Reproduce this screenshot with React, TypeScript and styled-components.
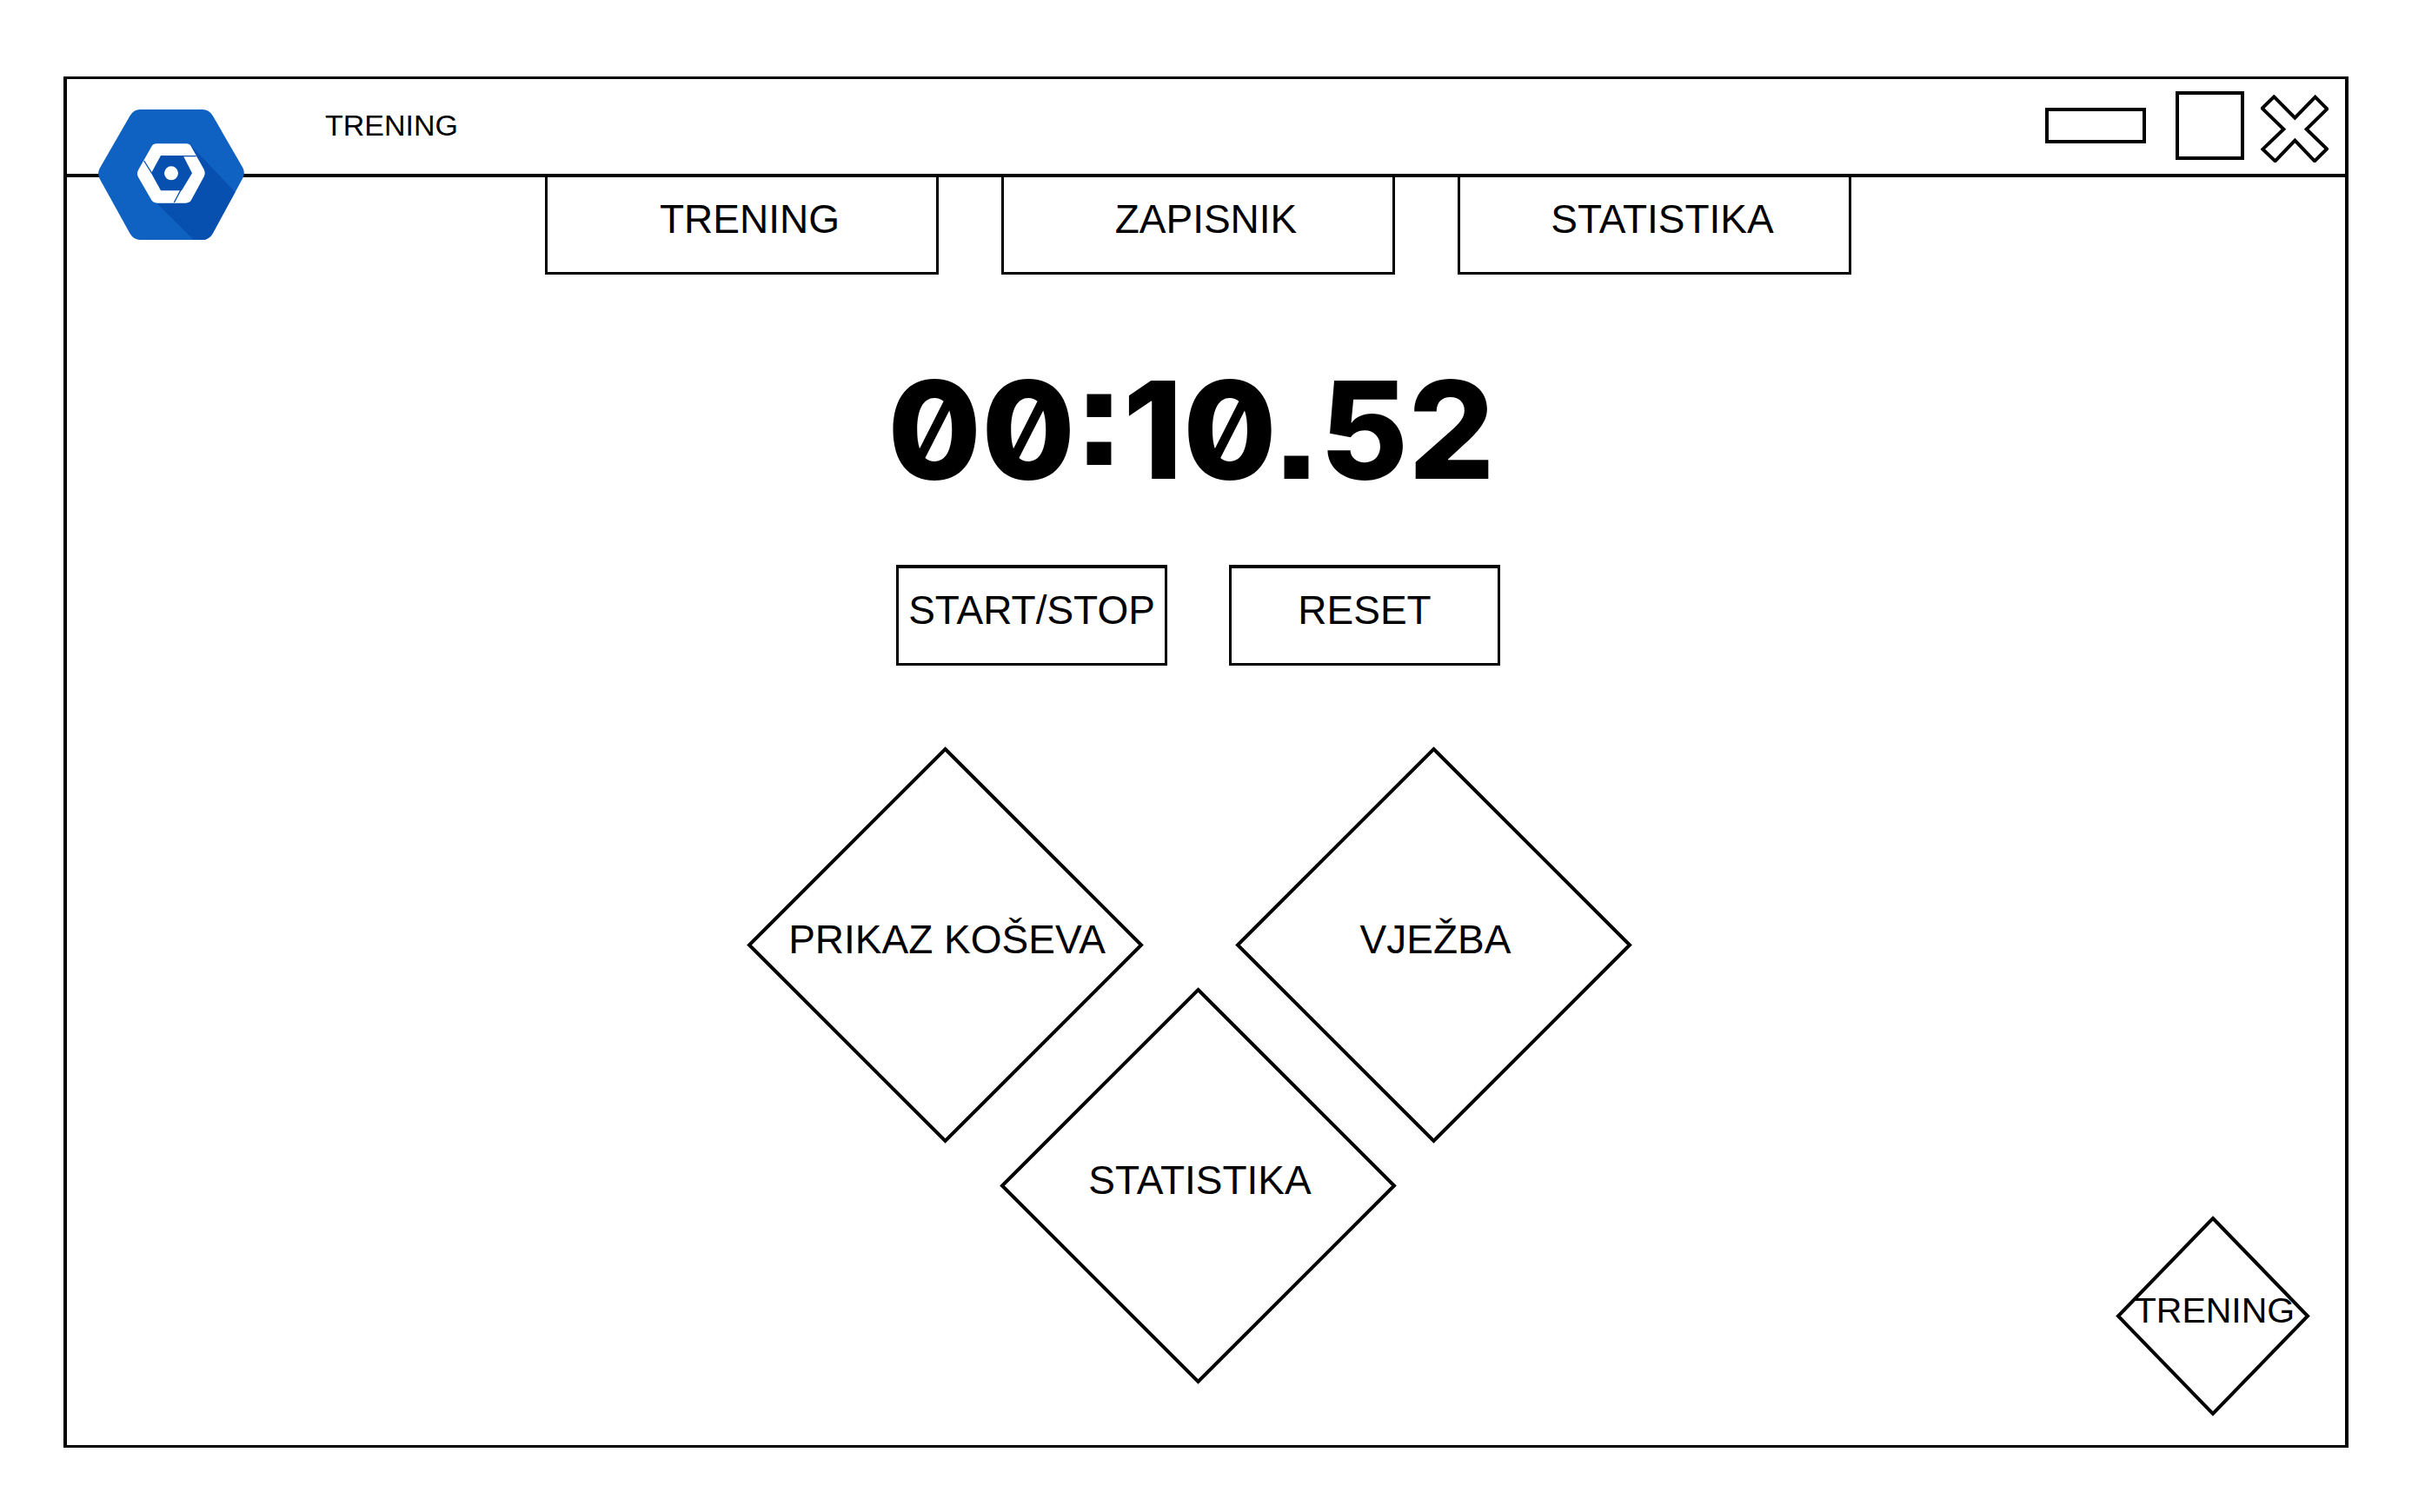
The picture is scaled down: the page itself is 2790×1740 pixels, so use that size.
import React, { useEffect, useState } from "react";
import styled, { createGlobalStyle } from "styled-components";

const ink = "#000";

const GlobalStyle = createGlobalStyle`
  *, *::before, *::after { box-sizing: border-box; }
  body {
    margin: 0;
    background: #fff;
    color: ${ink};
    font-family: "Liberation Sans", Arial, sans-serif;
  }
  button { font: inherit; color: inherit; background: none; border: 0; padding: 0; cursor: pointer; }
`;

const Page = styled.div`
  display: flex;
  min-height: 100vh;
  padding: 88px 88px 74px 73px;
`;

const Window = styled.div`
  position: relative;
  flex: 1;
  display: flex;
  flex-direction: column;
  border: solid ${ink};
  border-width: 3px 4px;
`;

const TitleBar = styled.header`
  display: flex;
  align-items: flex-start;
  height: 113px;
  padding: 0 19px 0 36px;
  border-bottom: 4px solid ${ink};
`;

const Logo = styled.svg`
  flex: none;
  width: 168px;
  height: 150px;
  margin-top: 35px;
`;

const Title = styled.h1`
  flex: 1;
  margin: 33px 0 0 93px;
  font-size: 34px;
  line-height: 40px;
  font-weight: 400;
`;

const WindowControls = styled.div`
  display: flex;
  align-items: flex-start;
  gap: 19px;
  padding-top: 14px;
`;

const MinimizeButton = styled.button`
  width: 116px;
  height: 41px;
  margin: 19px 15px 0 0;
  && { border: 4px solid ${ink}; }
`;

const MaximizeButton = styled.button`
  width: 79px;
  height: 79px;
  && { border: 4px solid ${ink}; }
`;

const CloseButton = styled.button`
  width: 78px;
  height: 78px;
  margin-top: 4px;
  svg { display: block; }
`;

const Content = styled.main`
  display: flex;
  flex-direction: column;
  align-items: center;
  padding-right: 18px;
`;

const Tabs = styled.nav`
  display: flex;
  gap: 72px;
`;

const Tab = styled.a`
  display: flex;
  align-items: center;
  justify-content: center;
  width: 453px;
  height: 112px;
  padding: 0 0 14px 18px;
  border: 3px solid ${ink};
  border-top: 0;
  color: inherit;
  font-size: 46px;
  line-height: 52px;
  text-decoration: none;
`;

const Timer = styled.time`
  margin-top: 99px;
  padding-right: 16px;
  font-family: Inter, "DejaVu Sans", sans-serif;
  font-size: 156px;
  line-height: 160px;
  font-weight: 800;
  font-feature-settings: "zero" 1, "ss07" 1;
  white-space: nowrap;
`;

const TimerActions = styled.div`
  display: flex;
  gap: 71px;
  margin-top: 75px;
`;

const ActionButton = styled.button`
  && {
    width: 312px;
    height: 116px;
    padding-bottom: 14px;
    border: 3px solid ${ink};
    border-top-width: 4px;
    font-size: 46px;
    line-height: 52px;
    white-space: nowrap;
  }
`;

const DiamondGrid = styled.div`
  display: grid;
  grid-template-columns: 291px 163px 108px 183px 272px;
  grid-template-rows: 277px 178px 277px;
  margin-top: 94px;
  margin-right: 20px;
`;

type Size = "large" | "small";

const DiamondButton = styled.button<{ $size: Size; $area?: string }>`
  display: grid;
  place-items: center;
  width: ${(p) => (p.$size === "large" ? 455 : 222)}px;
  height: ${(p) => (p.$size === "large" ? 455 : 229)}px;
  grid-area: ${(p) => p.$area ?? "auto"};
  && {
    font-size: ${(p) => (p.$size === "large" ? 46 : 41)}px;
    line-height: 52px;
    white-space: nowrap;
  }
  > * { grid-area: 1 / 1; }
  svg { width: 100%; height: 100%; overflow: visible; }
  span { padding: 0 0 14px 4px; }
`;

const FloatingCorner = styled.div`
  position: absolute;
  right: 41px;
  bottom: 34px;
`;

const AppLogo = () => (
  <Logo viewBox="159 167 504 450" role="img" aria-label="Logo">
    <defs>
      <clipPath id="hexagon">
        <path d="M303 167H519Q541 167 554 188L658 368Q667 386 658 404L554 595Q541 617 518 617H303Q282 617 269 596L164 406Q155 388 164 370L269 188Q282 167 303 167Z" />
      </clipPath>
    </defs>
    <g clipPath="url(#hexagon)">
      <path fill="#0f62c1" d="M150 160H670V625H150Z" />
      <path fill="#0850b0" d="M478 290L634 455L680 500V640H510L488 617L352 482Z" />
    </g>
    <path
      fill="#fff"
      d="M361 285H463Q474 285 480 295L524 374Q530 387 524 399L480 480Q474 490 461 490H362Q350 490 343 480L297 400Q291 388 297 376L343 295Q349 285 361 285Z"
    />
    <path fill="#0850b0" d="M375 326H452L483 387L447 447H375L342 387Z" />
    <path fill="none" stroke="#0850b0" strokeWidth="4" d="M375 328H497M317 344L344 387M444 445L421 488" />
    <circle cx="411" cy="387" r="24" fill="#fff" />
  </Logo>
);

const CloseIcon = () => (
  <svg width="78" height="78" viewBox="902 118 234 234" aria-hidden="true">
    <path
      fill="none"
      stroke={ink}
      strokeWidth="12"
      d="M948 125L1020 198L1090 126L1131 167L1060 237L1130 305L1088 347L1020 276L952 347L909 306L981 237L907 165Z"
    />
  </svg>
);

const Diamond = ({ label, size = "large", area }: { label: string; size?: Size; area?: string }) => {
  const [w, h] = size === "large" ? [455, 455] : [222, 229];
  return (
    <DiamondButton type="button" $size={size} $area={area}>
      <svg viewBox={`0 0 ${w} ${h}`} aria-hidden="true">
        <path
          fill="none"
          stroke={ink}
          strokeWidth="4"
          d={`M${w / 2} 2L${w - 2} ${h / 2}L${w / 2} ${h - 2}L2 ${h / 2}Z`}
        />
      </svg>
      <span>{label}</span>
    </DiamondButton>
  );
};

const pad = (n: number) => String(n).padStart(2, "0");
const formatTime = (cs: number) =>
  `${pad(Math.floor(cs / 6000))}:${pad(Math.floor(cs / 100) % 60)}.${pad(cs % 100)}`;

export default function App() {
  const [elapsed, setElapsed] = useState(1052);
  const [running, setRunning] = useState(false);

  useEffect(() => {
    if (!running) return;
    const id = setInterval(() => setElapsed((t) => t + 1), 10);
    return () => clearInterval(id);
  }, [running]);

  const reset = () => {
    setRunning(false);
    setElapsed(0);
  };

  return (
    <>
      <GlobalStyle />
      <Page>
        <Window>
          <TitleBar>
            <AppLogo />
            <Title>TRENING</Title>
            <WindowControls>
              <MinimizeButton type="button" aria-label="Minimiziraj" />
              <MaximizeButton type="button" aria-label="Maksimiziraj" />
              <CloseButton type="button" aria-label="Zatvori">
                <CloseIcon />
              </CloseButton>
            </WindowControls>
          </TitleBar>
          <Content>
            <Tabs>
              <Tab href="#trening">TRENING</Tab>
              <Tab href="#zapisnik">ZAPISNIK</Tab>
              <Tab href="#statistika">STATISTIKA</Tab>
            </Tabs>
            <Timer>{formatTime(elapsed)}</Timer>
            <TimerActions>
              <ActionButton type="button" onClick={() => setRunning((r) => !r)}>
                START/STOP
              </ActionButton>
              <ActionButton type="button" onClick={reset}>
                RESET
              </ActionButton>
            </TimerActions>
            <DiamondGrid>
              <Diamond label="PRIKAZ KOŠEVA" area="1 / 1 / 3 / 3" />
              <Diamond label="VJEŽBA" area="1 / 4 / 3 / 6" />
              <Diamond label="STATISTIKA" area="2 / 2 / 4 / 5" />
            </DiamondGrid>
          </Content>
          <FloatingCorner>
            <Diamond label="TRENING" size="small" />
          </FloatingCorner>
        </Window>
      </Page>
    </>
  );
}
